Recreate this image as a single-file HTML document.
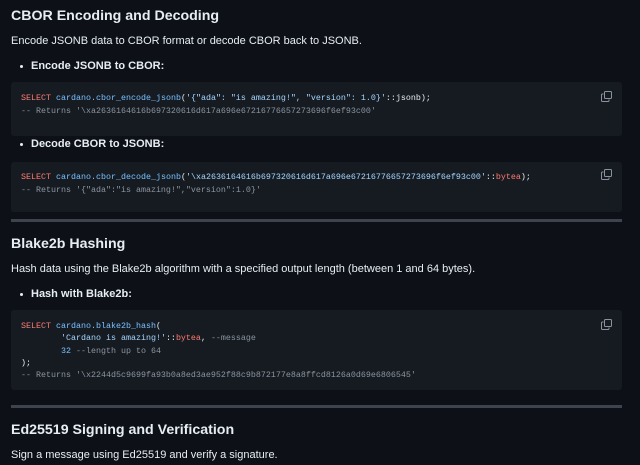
<!DOCTYPE html>
<html><head><meta charset="utf-8"><style>
html,body{margin:0;padding:0;background:#0d1117;width:640px;height:465px;overflow:hidden}
body{position:relative;font-family:"Liberation Sans",sans-serif;color:#e6edf3}
h2{position:absolute;margin:0;left:11px;font-size:14.2px;font-weight:bold;line-height:18px;white-space:nowrap}
p{position:absolute;margin:0;left:11px;font-size:11px;line-height:14px;white-space:nowrap}
.li{position:absolute;left:31px;font-size:11px;font-weight:bold;line-height:14px;white-space:nowrap}
.li:before{content:"";position:absolute;left:-11px;top:6px;width:3px;height:3px;border-radius:50%;background:#e6edf3}
.code{position:absolute;left:11px;width:611px;background:#161b22;border-radius:3px}
.code pre{margin:0;position:absolute;left:10px;font-family:"Liberation Mono",monospace;font-size:8.33px;line-height:12.3px;color:#e6edf3}
.k{color:#ff7b72}.f{color:#79c0ff}.s{color:#a5d6ff}.c{color:#8b949e}.n{color:#79c0ff}
.hr{position:absolute;left:11px;width:611px;height:3px;background:#3d444d}
.cp{position:absolute;right:10px;top:9px}
</style></head><body>
<h2 style="top:7px">CBOR Encoding and Decoding</h2>
<p style="top:34px">Encode JSONB data to CBOR format or decode CBOR back to JSONB.</p>
<div class="li" style="top:59px">Encode JSONB to CBOR:</div>
<div class="code" style="top:82px;height:54px">
<pre style="top:10px;line-height:13px"><span class="k">SELECT</span> <span class="f">cardano.cbor_encode_jsonb</span>(<span class="s">'{"ada": "is amazing!", "version": 1.0}'</span>::jsonb);
<span class="c">-- Returns '\xa2636164616b697320616d617a696e67216776657273696f6ef93c00'</span></pre>
<svg class="cp" width="11" height="11" viewBox="0 0 11 11" fill="none" stroke="#8b949e" stroke-width="1"><rect x="3.5" y="0.5" width="7" height="7" rx="1"/><path d="M2.5 3H1.5a1 1 0 0 0-1 1v5.5a1 1 0 0 0 1 1H7a1 1 0 0 0 1-1V8.5"/></svg>
</div>
<div class="li" style="top:137px">Decode CBOR to JSONB:</div>
<div class="code" style="top:162px;height:50px">
<pre style="top:9px;line-height:13px"><span class="k">SELECT</span> <span class="f">cardano.cbor_decode_jsonb</span>(<span class="s">'\xa2636164616b697320616d617a696e67216776657273696f6ef93c00'</span>::<span class="k">bytea</span>);
<span class="c">-- Returns '{"ada":"is amazing!","version":1.0}'</span></pre>
<svg class="cp" style="top:7px" width="11" height="11" viewBox="0 0 11 11" fill="none" stroke="#8b949e" stroke-width="1"><rect x="3.5" y="0.5" width="7" height="7" rx="1"/><path d="M2.5 3H1.5a1 1 0 0 0-1 1v5.5a1 1 0 0 0 1 1H7a1 1 0 0 0 1-1V8.5"/></svg>
</div>
<div class="hr" style="top:219px"></div>
<h2 style="top:235px">Blake2b Hashing</h2>
<p style="top:262px">Hash data using the Blake2b algorithm with a specified output length (between 1 and 64 bytes).</p>
<div class="li" style="top:287px">Hash with Blake2b:</div>
<div class="code" style="top:310px;height:80px">
<pre style="top:10px"><span class="k">SELECT</span> <span class="f">cardano.blake2b_hash</span>(
        <span class="s">'Cardano is amazing!'</span>::<span class="k">bytea</span>, <span class="c">--message</span>
        <span class="n">32</span> <span class="c">--length up to 64</span>
);
<span class="c">-- Returns '\x2244d5c9699fa93b0a8ed3ae952f88c9b872177e8a8ffcd8126a0d69e6806545'</span></pre>
<svg class="cp" width="11" height="11" viewBox="0 0 11 11" fill="none" stroke="#8b949e" stroke-width="1"><rect x="3.5" y="0.5" width="7" height="7" rx="1"/><path d="M2.5 3H1.5a1 1 0 0 0-1 1v5.5a1 1 0 0 0 1 1H7a1 1 0 0 0 1-1V8.5"/></svg>
</div>
<div class="hr" style="top:405px"></div>
<h2 style="top:421px">Ed25519 Signing and Verification</h2>
<p style="top:448px">Sign a message using Ed25519 and verify a signature.</p>
</body></html>
